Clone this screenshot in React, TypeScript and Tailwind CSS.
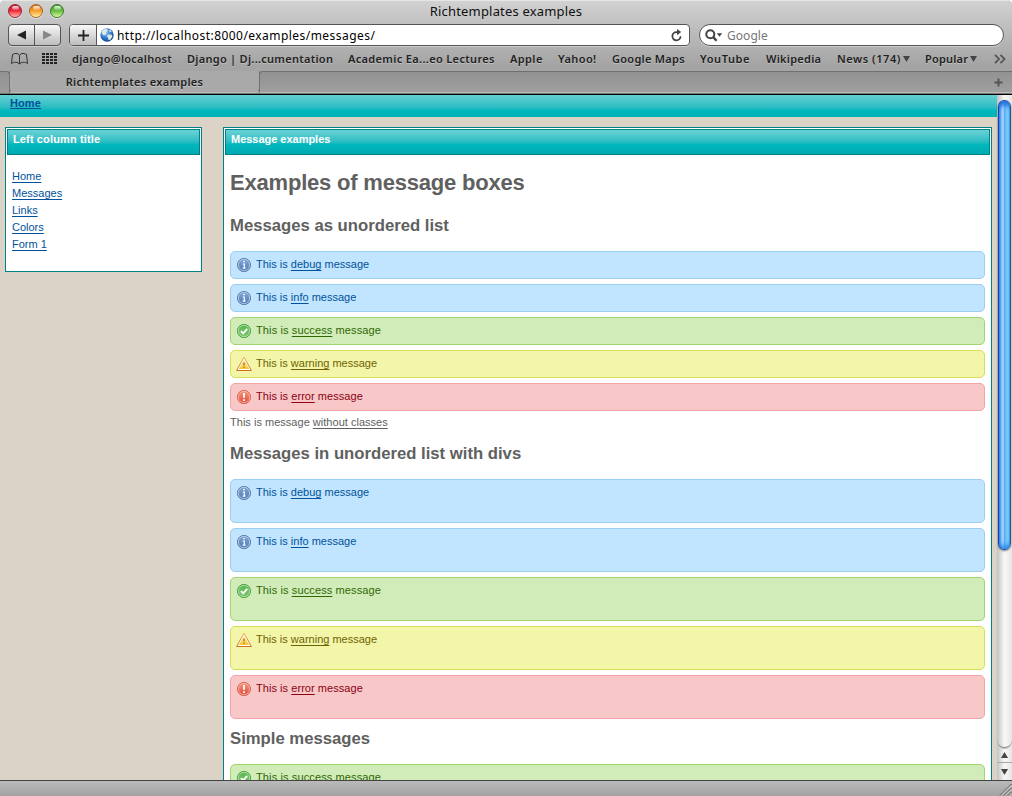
import React from "react";

type Kind = "info" | "success" | "warning" | "error";

const boxStyles: Record<Kind, string> = {
  info: "bg-[#c2e5ff] border-[#9bcef3] text-[#00529b]",
  success: "bg-[#d1ecb8] border-[#a0d56f] text-[#2f6805] tracking-[0.12px]",
  warning: "bg-[#f3f6a8] border-[#d6de5a] text-[#6e6204]",
  error: "bg-[#f8c8c9] border-[#f4a4a6] text-[#8c0012] tracking-[0.05px]",
};

const messages: { kind: Kind; word: string }[] = [
  { kind: "info", word: "debug" },
  { kind: "info", word: "info" },
  { kind: "success", word: "success" },
  { kind: "warning", word: "warning" },
  { kind: "error", word: "error" },
];

const bookmarks: { label: string; cls: string; arrow?: boolean }[] = [
  { label: "django@localhost", cls: "w-[100px] tracking-[0.27px]" },
  { label: "Django | Dj...cumentation", cls: "w-[146px] tracking-[0.28px]" },
  { label: "Academic Ea...eo Lectures", cls: "w-[147px] tracking-[0.34px]" },
  { label: "Apple", cls: "w-[33px] tracking-[0.4px]" },
  { label: "Yahoo!", cls: "w-[39px] tracking-[0.4px]" },
  { label: "Google Maps", cls: "w-[73px] tracking-[0.28px]" },
  { label: "YouTube", cls: "w-[51px] tracking-[0.6px]" },
  { label: "Wikipedia", cls: "w-[56px] tracking-[0.25px]" },
  { label: "News (174)", cls: "w-[73px] tracking-[0.55px]", arrow: true },
  { label: "Popular", cls: "w-[52px] tracking-[0.2px]", arrow: true },
];

function Defs() {
  return (
    <svg width="0" height="0" className="absolute">
      <defs>
        <linearGradient id="blueIcon" x1="0" y1="0" x2="0" y2="1">
          <stop offset="0" stopColor="#86a9d6" />
          <stop offset="1" stopColor="#4a78b5" />
        </linearGradient>
        <linearGradient id="greenIcon" x1="0" y1="0" x2="0" y2="1">
          <stop offset="0" stopColor="#58b84e" />
          <stop offset="1" stopColor="#7cc56c" />
        </linearGradient>
        <linearGradient id="redIcon" x1="0" y1="0" x2="0" y2="1">
          <stop offset="0" stopColor="#f59a80" />
          <stop offset="1" stopColor="#e2473a" />
        </linearGradient>
        <linearGradient id="yellowIcon" x1="0" y1="0" x2="0" y2="1">
          <stop offset="0" stopColor="#fdf0a0" />
          <stop offset="1" stopColor="#f6c436" />
        </linearGradient>
        <linearGradient id="orangeEdge" x1="0" y1="0" x2="0" y2="1">
          <stop offset="0" stopColor="#ecb04c" />
          <stop offset="1" stopColor="#d0701c" />
        </linearGradient>
        <radialGradient id="globe" cx="0.4" cy="0.3" r="0.75">
          <stop offset="0" stopColor="#8fc4f2" />
          <stop offset="0.6" stopColor="#2d74c8" />
          <stop offset="1" stopColor="#123f86" />
        </radialGradient>
      </defs>
    </svg>
  );
}

function MessageIcon({ kind }: { kind: Kind }) {
  if (kind === "warning") {
    return (
      <svg width="16" height="16" viewBox="0 0 16 16">
        <path d="M8 1.2 15.4 14.5H.6Z" fill="#fff" stroke="url(#orangeEdge)" strokeWidth="1" strokeLinejoin="round" />
        <path d="M8 3.8 13.2 13H2.8Z" fill="url(#yellowIcon)" />
        <path d="M8 6.4v3.2M8 10.8v1.3" stroke="#b07a1c" strokeWidth="1.4" />
      </svg>
    );
  }
  const fill = kind === "info" ? "url(#blueIcon)" : kind === "success" ? "url(#greenIcon)" : "url(#redIcon)";
  const ring = kind === "info" ? "#5474a6" : kind === "success" ? "#3f9a3a" : "#d25a4a";
  const inner = kind === "info" ? "#c3d5ec" : kind === "success" ? "#bfe6b5" : "#f8bfb0";
  return (
    <svg width="16" height="16" viewBox="0 0 16 16">
      <circle cx="8" cy="8" r="6.6" fill={fill} stroke={ring} strokeWidth="0.9" />
      <circle cx="8" cy="8" r="5.7" fill="none" stroke={inner} strokeWidth="0.8" />
      {kind === "info" && (
        <path d="M7.2 4.7h1.7M6.7 7h1.6v4M6.6 11.1h3" fill="none" stroke="#fff" strokeWidth="1.2" />
      )}
      {kind === "success" && <path d="M4.9 8.1 7.2 10.3 11.2 5.9" fill="none" stroke="#fff" strokeWidth="1.9" />}
      {kind === "error" && <path d="M8 4v4.8M8 10.2v1.8" stroke="#fff" strokeWidth="1.8" />}
    </svg>
  );
}

function MessageBox({ kind, word, tall }: { kind: Kind; word: string; tall?: boolean }) {
  return (
    <li
      className={`flex shrink-0 items-start rounded-[5px] border pl-[5px] pt-[5px] ${boxStyles[kind]} ${
        tall ? "h-[44px]" : "h-[28px]"
      }`}
    >
      <MessageIcon kind={kind} />
      <p className="ml-[4px] text-[11px] leading-[15px] whitespace-pre">
        This is <span className="underline underline-offset-2">{word}</span> message
      </p>
    </li>
  );
}

function Light({ color }: { color: string }) {
  return (
    <span
      className={`flex h-[14px] w-[14px] justify-center rounded-full border shadow-[0_1px_0_rgba(255,255,255,0.5)] ${color}`}
    >
      <span className="mt-px h-[4px] w-[7px] rounded-full bg-linear-to-b from-white/90 to-white/20" />
    </span>
  );
}

function PanelTitle({ children, className }: { children: React.ReactNode; className?: string }) {
  return (
    <div
      className={`h-[26px] border border-[#008088] bg-linear-to-b from-[#63d0d4] from-5% via-[#00b8be] via-60% to-[#00a9b0] pl-[5px] text-[11px] leading-[18px] font-bold text-white ${className ?? ""}`}
    >
      {children}
    </div>
  );
}

function Down({ className }: { className?: string }) {
  return (
    <svg width="7" height="6" viewBox="0 0 7 6" className={className}>
      <path d="M0 0h7L3.5 6z" fill="#444" />
    </svg>
  );
}

const lucida = "font-['Noto_Sans','Open_Sans',sans-serif]";

function Toolbar() {
  return (
    <div className="flex h-[23px] items-start px-[8px]">
      <div className="flex h-[22px] w-[53px] rounded-[4px] border border-[#555] bg-linear-to-b from-[#f8f8f8] to-[#bdbdbd] shadow-[0_1px_0_#ccc]">
        <div className="flex w-[26px] items-center justify-center border-r border-[#555]">
          <svg width="9" height="10" viewBox="0 0 9 10">
            <path d="M9 .5v9L0 5z" fill="#222" />
          </svg>
        </div>
        <div className="flex flex-1 items-center justify-center">
          <svg width="9" height="10" viewBox="0 0 9 10">
            <path d="M0 .5v9L9 5z" fill="#888" />
          </svg>
        </div>
      </div>
      <div className="ml-[8px] flex h-[22px] w-[621px] overflow-hidden rounded-[4px] border border-[#555] bg-white shadow-[0_1px_0_#ccc]">
        <div className="flex w-[27px] items-center justify-center border-r border-[#555] bg-linear-to-b from-[#f8f8f8] to-[#bdbdbd]">
          <svg width="11" height="11" viewBox="0 0 11 11">
            <path d="M5.5 0v11M0 5.5h11" stroke="#222" strokeWidth="1.8" />
          </svg>
        </div>
        <svg width="14" height="14" viewBox="0 0 14 14" className="mt-[3px] ml-[3px]">
          <circle cx="7" cy="7" r="6.7" fill="url(#globe)" />
          <path
            d="M1.5 3.5 4 1.2 7 1l.8 1.8L6 4.5 6.5 6 4 7.5 2.2 6zM8.5 6.5l3.3.2.5 2-2 3-1.8.3-.6-2.5-1.3-1.4zM9.5 1.5l2 1.5-.5 1.2-1.6-.8z"
            fill="#d8e9e6"
          />
        </svg>
        <span className={`ml-[3px] text-[12px] leading-[21px] tracking-[0.45px] text-black ${lucida}`}>
          http://localhost:8000/examples/messages/
        </span>
        <svg width="12" height="13" viewBox="0 0 12 13" className="mt-[4px] mr-[6px] ml-auto">
          <path d="M9.6 7.3A4.1 4.1 0 1 1 5.6 3.1H7.5" fill="none" stroke="#444" strokeWidth="1.8" />
          <path d="M6 0v6.2L10.2 3.1z" fill="#444" />
        </svg>
      </div>
      <div className="ml-[9px] flex h-[22px] w-[305px] rounded-full border border-[#555] bg-white pl-[5px] shadow-[0_1px_0_#ccc]">
        <svg width="19" height="14" viewBox="0 0 19 14" className="mt-[4px]">
          <circle cx="5.3" cy="5.3" r="4" fill="none" stroke="#444" strokeWidth="2" />
          <path d="M8.2 8.1 11.6 11.7" stroke="#444" strokeWidth="2.4" />
          <path d="M11.8 4.2h5.4L14.5 7.8z" fill="#444" />
        </svg>
        <span className={`ml-[3px] text-[12px] leading-[21px] tracking-[0.05px] text-[#777] ${lucida}`}>Google</span>
      </div>
    </div>
  );
}

function BookmarkBar() {
  return (
    <div className="flex h-[24px] items-center pl-[11px]">
      <svg width="17" height="12" viewBox="0 0 17 12">
        <path
          d="M8.5 2.3C7.5.9 6.600.5 5 .5 3.600.5 2.500.8 1.500 1.500L.5 10.500C2 9.500 3.300 9.300 4.700 9.300 6.500 9.300 7.700 9.900 8.500 11.200 9.300 9.900 10.500 9.300 12.300 9.300 13.700 9.300 15 9.500 16.500 10.500L15.500 1.500C14.500.8 13.400.5 12 .5 10.400.5 9.500.9 8.500 2.300V11"
          fill="none"
          stroke="#333"
          strokeWidth="1"
          strokeLinejoin="round"
        />
      </svg>
      <svg width="15" height="12" viewBox="0 0 15 12" className="ml-[14px]">
        {[0, 4, 8, 12].map((x) =>
          [0, 3, 6, 9].map((y) => <rect key={`${x}-${y}`} x={x} y={y} width="3" height="2" fill="#222" />),
        )}
      </svg>
      <div
        className={`ml-[15px] flex items-center gap-[15px] text-[11px] leading-[24px] font-semibold text-[#222] [text-shadow:0_1px_0_rgba(255,255,255,0.3)] ${lucida}`}
      >
        {bookmarks.map((b) => (
          <span key={b.label} className={`flex shrink-0 items-center whitespace-nowrap ${b.cls}`}>
            {b.label}
            {b.arrow && <Down className="ml-auto" />}
          </span>
        ))}
      </div>
      <svg width="12" height="10" viewBox="0 0 12 10" className="ml-[17px]">
        <path d="M1 .8 5 5 1 9.2M6.5.8l4 4.2-4 4.2" fill="none" stroke="#555" strokeWidth="1.8" />
      </svg>
    </div>
  );
}

function TabBar() {
  return (
    <div className="flex h-[23px] border-b border-[#777] bg-[#a8a8a8]">
      <div className="h-[22px] w-[10px] rounded-tr-[4px] border-t border-r border-[#707070] bg-linear-to-b from-[#929292] to-[#9c9c9c]" />
      <div
        className={`-mx-px h-[22px] w-[251px] rounded-b-[5px] border-x border-b border-[#747474] border-b-[#bbb] bg-[#a9a9a9] text-center text-[11px] leading-[22px] font-semibold tracking-[0.3px] text-[#222] [text-shadow:0_1px_0_rgba(255,255,255,0.3)] ${lucida}`}
      >
        Richtemplates examples
      </div>
      <div className="flex h-[22px] flex-1 items-center justify-end rounded-tl-[4px] border-t border-b border-l border-[#707070] border-b-[#bbb] bg-linear-to-b from-[#929292] to-[#9f9f9f] pr-[9px]">
        <svg width="9" height="9" viewBox="0 0 9 9">
          <path d="M4.5.5v8M.5 4.5h8" stroke="#555" strokeWidth="2" />
        </svg>
      </div>
    </div>
  );
}

function ScrollBar() {
  return (
    <div className="flex w-[15px] shrink-0 flex-col bg-linear-to-r from-[#c2c2c2] via-[#f8f8f8] via-50% to-[#e6e6e6]">
      <div className="mt-[5px] ml-px h-[450px] w-[13px] shrink-0 rounded-full border border-[#123fb0] border-r-[#35527c] bg-linear-to-r from-[#3f8be8] via-[#a5d5fb] via-30% to-[#38a8f5] shadow-[0_1px_2px_rgba(0,0,0,0.5)]">
        <div className="h-full w-full rounded-full bg-[linear-gradient(to_right,transparent_40%,#5badf3_50%,#8ddcff_85%,transparent)] shadow-[inset_0_5px_4px_-1px_#2370df,inset_0_-4px_4px_-1px_#2f8cec]" />
      </div>
      <div className="h-[198px] shrink-0 rounded-b-full border-b border-[#888] shadow-[0_1px_1px_#bbb]" />
      <div className="flex h-[15px] shrink-0 items-center justify-center border-b border-[#aaa]">
        <svg width="7" height="6" viewBox="0 0 7 6">
          <path d="M0 6h7L3.5 0z" fill="#444" />
        </svg>
      </div>
      <div className="flex flex-1 items-center justify-center">
        <Down />
      </div>
    </div>
  );
}

export default function App() {
  return (
    <div className="h-[796px] w-[1012px] overflow-hidden bg-white font-['Liberation_Sans',Arial,sans-serif]">
      <Defs />
      <div className="flex h-full flex-col overflow-hidden rounded-t-[5px] bg-[#a9a9a9]">
        <header className="flex h-[94px] shrink-0 flex-col bg-linear-to-b from-[#d2d2d2] to-[#a4a4a4] to-70%">
          <div className="relative flex h-[24px] shrink-0 items-start gap-[7px] border-t border-[#e6e6e6] pt-[3px] pl-[8px]">
            <Light color="border-[#8e2a30] bg-linear-to-b from-[#c8102e] via-[#f0263e] to-[#ffb0b0]" />
            <Light color="border-[#a5642a] bg-linear-to-b from-[#d96a10] via-[#f9a02c] to-[#fff09a]" />
            <Light color="border-[#3e7a2c] bg-linear-to-b from-[#3a9a26] via-[#68c044] to-[#d6f7a0]" />
            <div
              className={`absolute inset-x-0 top-0 text-center text-[13px] leading-[21px] tracking-[0.18px] text-[#111] ${lucida}`}
            >
              Richtemplates examples
            </div>
          </div>
          <Toolbar />
          <BookmarkBar />
          <TabBar />
        </header>
        <div className="flex h-[686px] shrink-0 overflow-hidden border-t border-black">
          <main className="flex min-w-0 flex-1 flex-col overflow-hidden bg-[#dad3c6]">
            <nav className="h-[22px] shrink-0 bg-linear-to-b from-[#63d0d4] via-[#00b8be] via-70% to-[#00b0b7] pl-[10px] text-[11px] leading-[17px] font-bold tracking-[0.1px] text-[#00529b]">
              <span className="underline underline-offset-1">Home</span>
            </nav>
            <div className="flex items-start pt-[10px] pl-[5px]">
              <aside className="h-[145px] w-[197px] border border-[#008088] bg-white p-px">
                <PanelTitle className="tracking-[0.13px]">Left column title</PanelTitle>
                <ul className="mt-[13px] pl-[5px] text-[11px] leading-[17px] text-[#00529b]">
                  {["Home", "Messages", "Links", "Colors", "Form 1"].map((l) => (
                    <li key={l}>
                      <span className="underline underline-offset-2">{l}</span>
                    </li>
                  ))}
                </ul>
              </aside>
              <section className="ml-[21px] h-[760px] w-[769px] border border-[#008088] bg-white p-px">
                <PanelTitle className="tracking-[-0.02px]">Message examples</PanelTitle>
                <div className="flex flex-col px-[5px] text-[#606060]">
                  <h1 className="mt-[13px] text-[22px] leading-[30px] font-bold tracking-[-0.2px]">
                    Examples of message boxes
                  </h1>
                  <h2 className="mt-[18px] text-[16.7px] leading-[20px] font-bold">Messages as unordered list</h2>
                  <ul className="mt-[15px] flex flex-col gap-[5px]">
                    {messages.map((m) => (
                      <MessageBox key={m.word} {...m} />
                    ))}
                  </ul>
                  <p className="mt-[4px] text-[11px] leading-[15px] tracking-[0.02px]">
                    This is message <span className="underline underline-offset-2">without classes</span>
                  </p>
                  <h2 className="mt-[14px] text-[16.7px] leading-[20px] font-bold">
                    Messages in unordered list with divs
                  </h2>
                  <ul className="mt-[15px] flex flex-col gap-[5px]">
                    {messages.map((m) => (
                      <MessageBox key={m.word} {...m} tall />
                    ))}
                  </ul>
                  <h2 className="mt-[10px] text-[16.7px] leading-[20px] font-bold">Simple messages</h2>
                  <ul className="mt-[15px] flex flex-col gap-[5px]">
                    <MessageBox kind="success" word="success" />
                  </ul>
                </div>
              </section>
            </div>
          </main>
          <ScrollBar />
        </div>
        <footer className="flex flex-1 items-end justify-end border-t border-[#444] bg-linear-to-b from-[#bababa] to-[#a2a2a2]">
          <svg width="13" height="13" viewBox="0 0 13 13">
            <path d="M1 12.5 12.5 1M5 12.5 12.5 5M9 12.5 12.5 9" stroke="#555" strokeWidth="1" />
            <path d="M2.2 12.5 12.5 2.2M6.2 12.5 12.5 6.2M10.2 12.5 12.5 10.2" stroke="#ddd" strokeWidth="0.8" />
          </svg>
        </footer>
      </div>
    </div>
  );
}
